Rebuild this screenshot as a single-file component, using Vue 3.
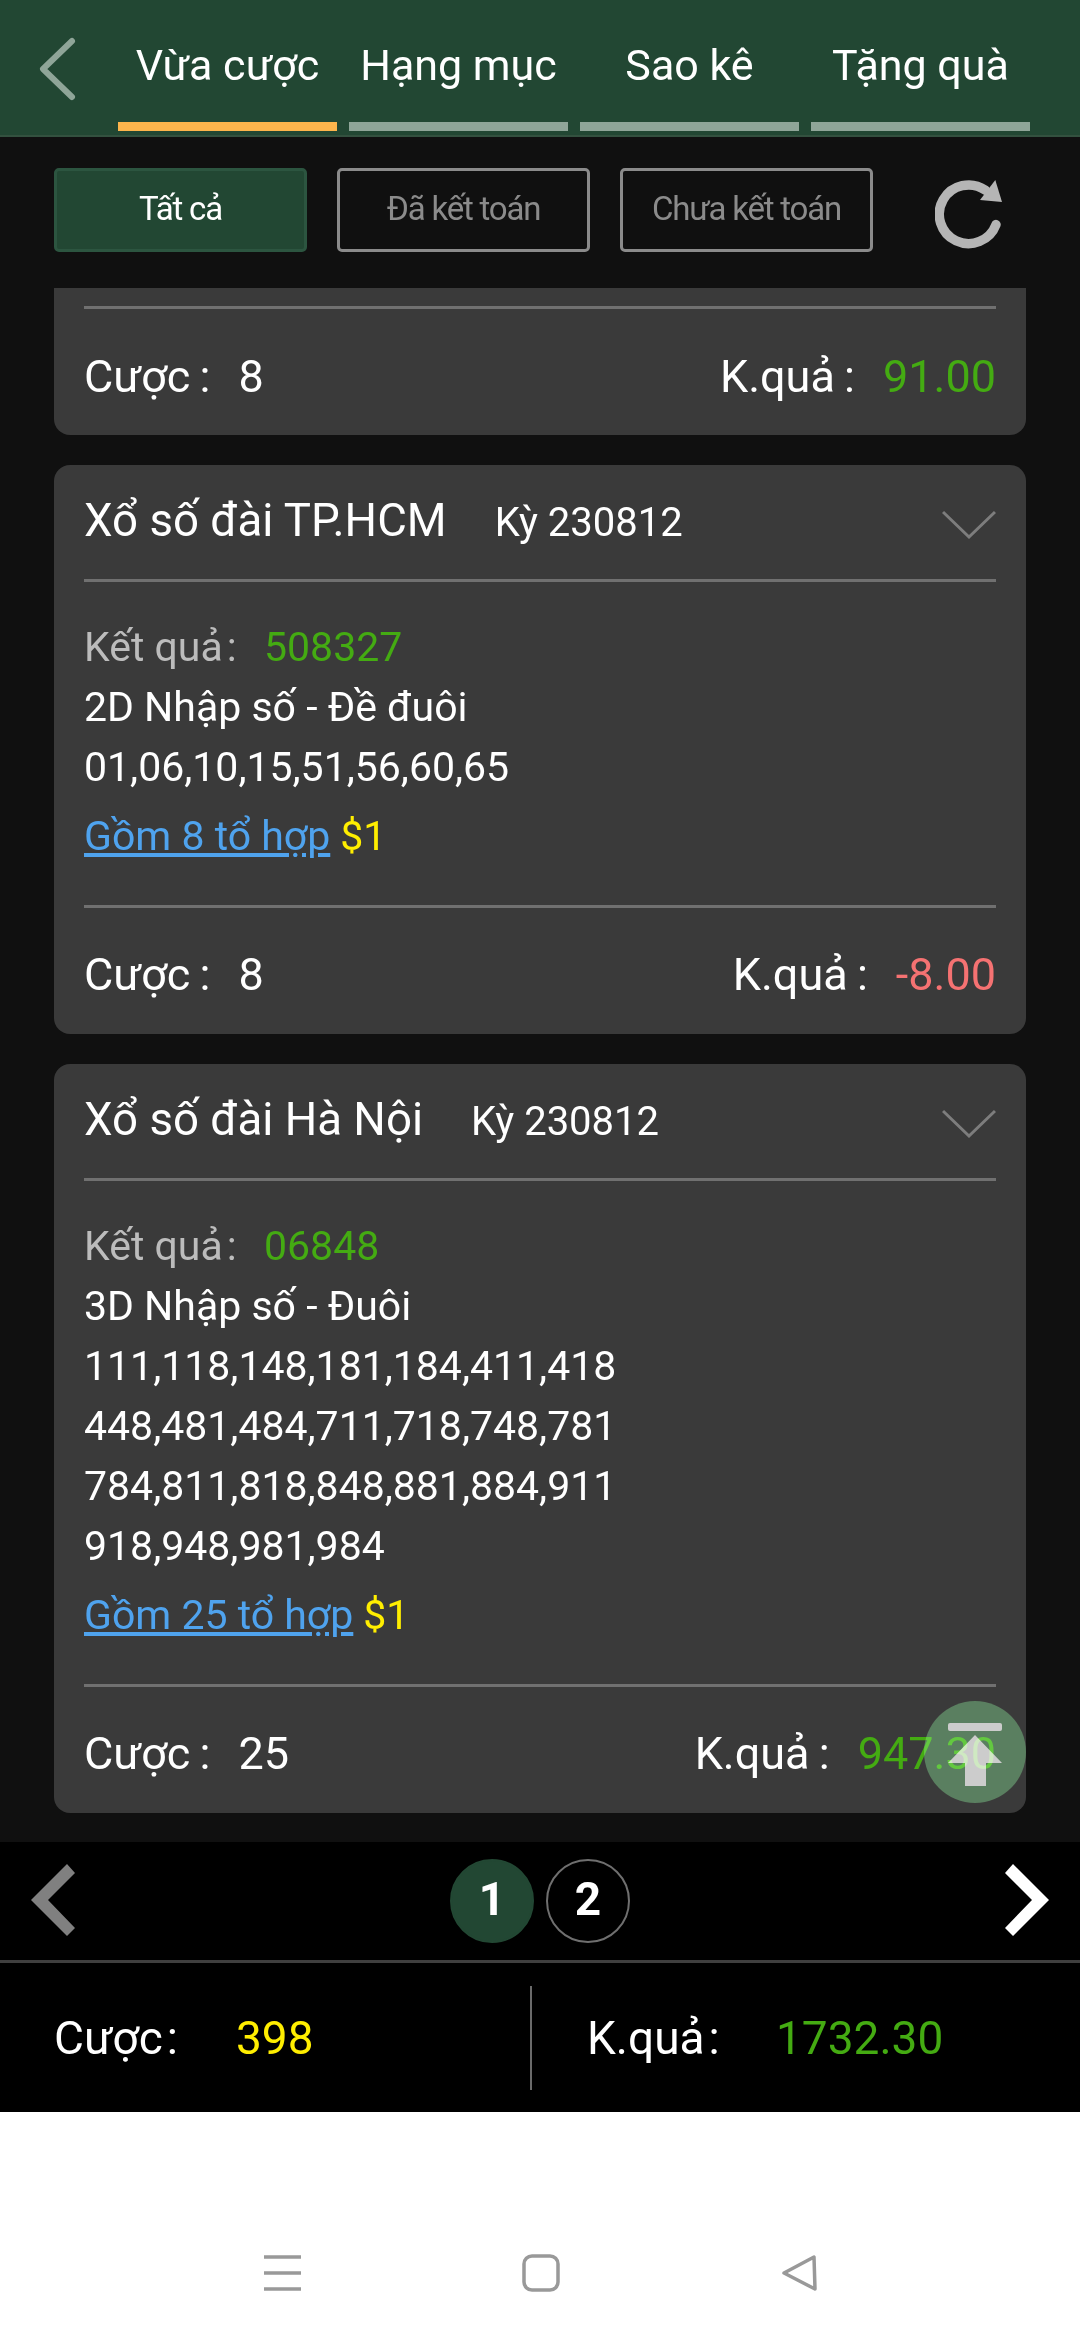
<!--
    lịch sử cược
-->

<script setup>
    //------- data -------
    const tabs = ['Vừa cược', 'Hạng mục', 'Sao kê', 'Tặng quà'];
    const filters = ['Tất cả', 'Đã kết toán', 'Chưa kết toán'];

    const bets = [
        {
            name: 'Xổ số đài TP.HCM',
            period: 'Kỳ 230812',
            result: '508327',
            type: '2D Nhập số - Đề đuôi',
            numbers: ['01,06,10,15,51,56,60,65'],
            combo: 'Gồm 8 tổ hợp',
            stake: 8,
            payout: '-8.00',
            lost: true,
        },
        {
            name: 'Xổ số đài Hà Nội',
            period: 'Kỳ 230812',
            result: '06848',
            type: '3D Nhập số - Đuôi',
            numbers: [
                '111,118,148,181,184,411,418',
                '448,481,484,711,718,748,781',
                '784,811,818,848,881,884,911',
                '918,948,981,984',
            ],
            combo: 'Gồm 25 tổ hợp',
            stake: 25,
            payout: '947.30',
            lost: false,
        },
    ];
</script>

<template>
    <div class="page">
        <header class="topbar">
            <svg class="back" width="42" height="66" viewBox="0 0 42 66">
                <path d="M36 5 L7 33 L36 61" fill="none" stroke="#8fa598" stroke-width="6" stroke-linecap="round" stroke-linejoin="round" />
            </svg>
            <nav class="tabs">
                <div v-for="(tab, i) in tabs" :key="tab" class="tab" :class="{ active: i === 0 }">
                    <span class="tab-label">{{ tab }}</span>
                    <span class="tab-bar"></span>
                </div>
            </nav>
        </header>

        <section class="filters">
            <button v-for="(f, i) in filters" :key="f" class="filter" :class="{ active: i === 0 }">{{ f }}</button>
            <svg class="refresh" width="70" height="70" viewBox="0 0 70 70">
                <path d="M50.3 11.2 A29.3 29.3 0 1 0 61 45.6" fill="none" stroke="#b5b5b5" stroke-width="9.5" stroke-linecap="round" />
                <path d="M60.3 1 L67 23 L45 21 Z" fill="#b5b5b5" />
            </svg>
        </section>

        <main class="list">
            <!-- kaart die half uit beeld gescrold is -->
            <article class="card card-cut">
                <div class="foot">
                    <div class="foot-left"><span>Cược&thinsp;:</span><span class="stake">8</span></div>
                    <div class="foot-right"><span>K.quả&thinsp;:</span><span class="win">91.00</span></div>
                </div>
            </article>

            <article v-for="bet in bets" :key="bet.name" class="card">
                <div class="head">
                    <span class="name">{{ bet.name }}</span>
                    <span class="period">{{ bet.period }}</span>
                    <svg class="chevron" width="54" height="30" viewBox="0 0 54 30">
                        <path d="M1 2 L27 27 L53 2" fill="none" stroke="#7d7d7d" stroke-width="3" />
                    </svg>
                </div>
                <div class="body">
                    <div class="line">
                        <span class="muted">Kết quả<span class="colon">:</span></span>
                        <span class="win">{{ bet.result }}</span>
                    </div>
                    <div class="line">{{ bet.type }}</div>
                    <div v-for="row in bet.numbers" :key="row" class="line">{{ row }}</div>
                    <div class="line combo">
                        <a class="combo-link">{{ bet.combo }}</a>
                        <span class="price">$1</span>
                    </div>
                </div>
                <div class="foot">
                    <div class="foot-left"><span>Cược&thinsp;:</span><span class="stake">{{ bet.stake }}</span></div>
                    <div class="foot-right">
                        <span>K.quả&thinsp;:</span>
                        <span :class="bet.lost ? 'loss' : 'win'">{{ bet.payout }}</span>
                    </div>
                </div>
            </article>

            <!-- terug naar boven knop ligt over de laatste kaart -->
            <div class="to-top">
                <svg class="to-top-icon" width="54" height="64" viewBox="0 0 54 64">
                    <rect x="0" y="0" width="54" height="8" rx="2" fill="#bdbdbd" />
                    <path d="M27 12 L54 40 L38 40 L38 63 L17 63 L17 40 L0 40 Z" fill="#bdbdbd" />
                </svg>
            </div>
        </main>

        <section class="pager">
            <svg width="46" height="74" viewBox="0 0 46 74">
                <path d="M1 36 L37 0 L45 9 L18 36 L45 64 L37 72 Z" fill="#808080" />
            </svg>
            <div class="pages">
                <span class="pg pg-active">1</span>
                <span class="pg">2</span>
            </div>
            <svg width="46" height="74" viewBox="0 0 46 74">
                <path d="M45 36 L9 0 L1 9 L28 36 L1 64 L9 72 Z" fill="#fff" />
            </svg>
        </section>

        <section class="summary">
            <div class="sum-col sum-left">
                <span class="sum-label">Cược<span class="colon">:</span></span>
                <span class="sum-stake">398</span>
            </div>
            <div class="sum-col sum-right">
                <span class="sum-label">K.quả<span class="colon">:</span></span>
                <span class="win">1732.30</span>
            </div>
        </section>

        <footer class="sysnav">
            <svg width="38" height="36" viewBox="0 0 38 36">
                <path d="M0 2 H37 M0 18 H37 M0 34 H37" stroke="#999" stroke-width="3.5" />
            </svg>
            <svg width="38" height="38" viewBox="0 0 38 38">
                <rect x="2" y="2" width="34" height="34" rx="8" fill="none" stroke="#999" stroke-width="3.5" />
            </svg>
            <svg width="38" height="38" viewBox="0 0 38 38">
                <path d="M4 19 L34 3 L35 35 Z" fill="none" stroke="#999" stroke-width="3.5" stroke-linejoin="round" />
            </svg>
        </footer>
    </div>
</template>

<style>
    html, body {
        margin: 0;
        background: #fff;
    }
</style>

<style scoped>
    .page {
        width: 1080px;
        height: 2340px;
        display: flex;
        flex-direction: column;
        font-family: Roboto, sans-serif;
        color: #fff;
        background: #fff;
        overflow: hidden;
    }

    /* ------ header ------ */
    .topbar {
        height: 137px;
        box-sizing: border-box;
        flex: none;
        display: flex;
        background: #224733;
        border-bottom: 2px solid #33513f;
        padding-left: 36px;
    }
    .back {
        margin-top: 36px;
    }
    .tabs {
        display: flex;
        gap: 12px;
        margin-left: 40px;
    }
    .tab {
        width: 219px;
        display: flex;
        flex-direction: column;
        align-items: center;
    }
    .tab-label {
        height: 122px;
        line-height: 130px;
        font-size: 43px;
        white-space: nowrap;
    }
    .tab-bar {
        width: 100%;
        height: 9px;
        background: #8fa598;
    }
    .tab.active .tab-bar {
        background: #fdb54c;
    }

    /* ------ filters ------ */
    .filters {
        height: 151px;
        box-sizing: border-box;
        flex: none;
        display: flex;
        align-items: flex-start;
        gap: 30px;
        padding: 31px 54px 0;
        background: #101010;
    }
    .filter {
        width: 253px;
        height: 84px;
        padding: 0 0 3px;
        border: 3px solid #8b8b8b;
        border-radius: 5px;
        background: transparent;
        color: #8b8b8b;
        font-family: inherit;
        font-size: 33px;
        letter-spacing: -1.2px;
    }
    .filter.active {
        background: #224733;
        border-color: #2c5540;
        color: #fff;
    }
    .refresh {
        margin: 11px 0 0 32px;
    }

    /* ------ list ------ */
    .list {
        position: relative;
        flex: 1;
        display: flex;
        flex-direction: column;
        gap: 30px;
        padding: 0 54px;
        background: #101010;
    }
    .card {
        background: #3a3a3a;
        border-radius: 16px;
        padding: 0 30px;
    }
    .card-cut {
        border-radius: 0 0 16px 16px;
        padding-top: 18px;
    }
    .head {
        height: 114px;
        display: flex;
        align-items: center;
        border-bottom: 3px solid #707070;
    }
    .name {
        font-size: 45.6px;
        margin-top: -3px;
    }
    .period {
        font-size: 40px;
        margin-left: 48px;
    }
    .chevron {
        margin-left: auto;
        margin-top: 6px;
    }
    .body {
        padding: 35px 0 39px;
        border-bottom: 3px solid #707070;
        font-size: 41px;
    }
    .line {
        height: 60px;
        line-height: 60px;
        white-space: nowrap;
    }
    .muted {
        display: inline-block;
        width: 180px;
        color: #bcbcbc;
    }
    .colon {
        margin-left: 4px;
    }
    .combo {
        margin-top: 9px;
    }
    .combo-link {
        color: #4fa3ee;
        text-decoration: underline;
        text-underline-offset: 3px;
    }
    .price {
        color: #ffee00;
        margin-left: 10px;
    }
    .foot {
        height: 126px;
        box-sizing: border-box;
        padding-top: 6px;
        display: flex;
        align-items: center;
        justify-content: space-between;
        font-size: 45px;
    }
    .card-cut .foot {
        height: 129px;
        padding-top: 8px;
        border-top: 3px solid #707070;
    }
    .foot-left, .foot-right {
        display: flex;
        gap: 28px;
    }
    .win {
        color: #44ab12;
    }
    .loss {
        color: #f57272;
    }
    .to-top {
        position: absolute;
        right: 54px;
        bottom: 39px;
        width: 102px;
        height: 102px;
        border-radius: 50%;
        background: #2a5931;
        mix-blend-mode: screen;
        display: flex;
        align-items: center;
        justify-content: center;
    }
    .to-top-icon {
        margin-top: 6px;
    }

    /* ------ pager ------ */
    .pager {
        height: 118px;
        flex: none;
        display: flex;
        align-items: center;
        justify-content: space-between;
        padding: 0 30px;
        background: #000;
    }
    .pages {
        display: flex;
        gap: 12px;
    }
    .pg {
        width: 84px;
        height: 84px;
        box-sizing: border-box;
        border: 2px solid #6f6f6f;
        border-radius: 50%;
        display: flex;
        align-items: center;
        justify-content: center;
        padding-bottom: 4px;
        font-size: 46px;
        font-weight: 700;
    }
    .pg-active {
        background: #224733;
        border-color: #224733;
    }

    /* ------ totals ------ */
    .summary {
        height: 152px;
        flex: none;
        display: flex;
        align-items: center;
        background: #000;
        border-top: 3px solid #3f3f3f;
        box-sizing: border-box;
        font-size: 46px;
    }
    .sum-col {
        display: flex;
        align-items: center;
        height: 104px;
    }
    .sum-left {
        width: 476px;
        padding-left: 54px;
        box-sizing: content-box;
        border-right: 2px solid #6a6a6a;
    }
    .sum-right {
        padding-left: 55px;
    }
    .sum-label {
        width: 182px;
    }
    .sum-right .sum-label {
        width: 189px;
    }
    .sum-stake {
        color: #ffee00;
    }

    /* ------ android nav ------ */
    .sysnav {
        flex: none;
        height: 228px;
        background: #fff;
        display: flex;
        align-items: center;
        gap: 220px;
        padding: 94px 0 0 264px;
        box-sizing: border-box;
    }
</style>
